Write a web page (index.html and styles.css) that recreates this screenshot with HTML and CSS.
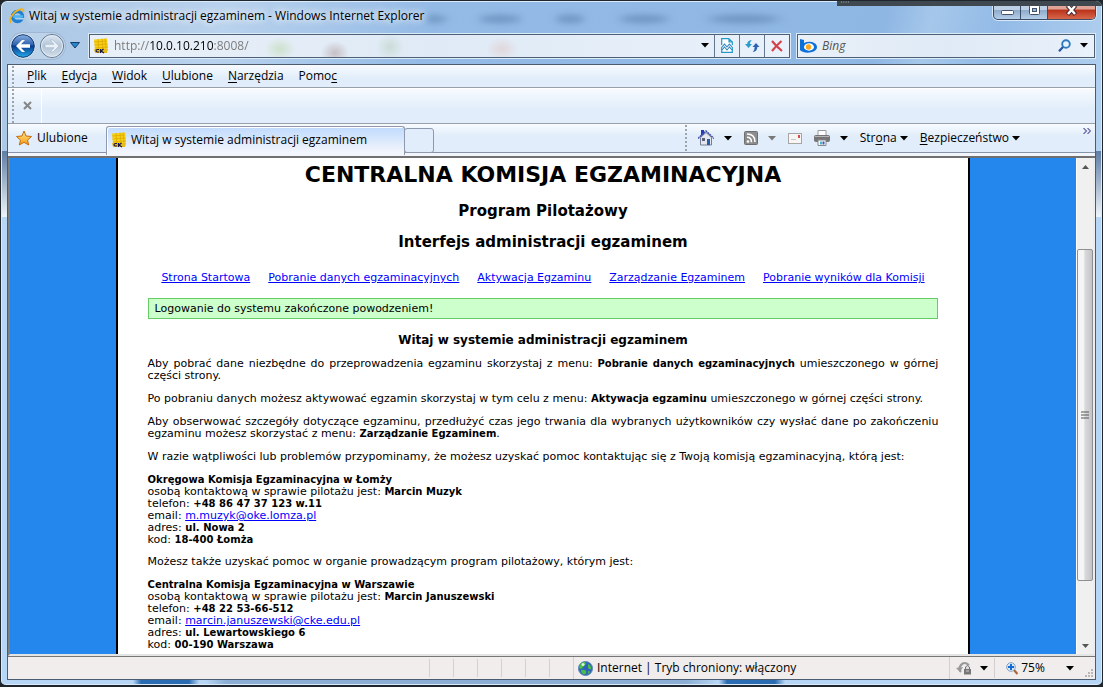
FILE: index.html
```html
<!DOCTYPE html>
<html lang="pl">
<head>
<meta charset="utf-8">
<title>Witaj w systemie administracji egzaminem</title>
<link rel="stylesheet" href="styles.css">
</head>
<body>
<svg width="0" height="0" class="defs" aria-hidden="true">
  <defs>
    <linearGradient id="blue" x2="0" y2="1"><stop offset="0" stop-color="#8fb4e4"/><stop offset=".45" stop-color="#2d62ad"/><stop offset=".5" stop-color="#06398c"/><stop offset="1" stop-color="#28b3f3"/></linearGradient>
    <linearGradient id="pale" x2="0" y2="1"><stop offset="0" stop-color="#dbe6f2"/><stop offset=".5" stop-color="#b3c5d8"/><stop offset="1" stop-color="#d3dfea"/></linearGradient>
    <linearGradient id="gold" x2="0" y2="1"><stop offset="0" stop-color="#ffe98a"/><stop offset="1" stop-color="#f79a10"/></linearGradient>
    <symbol id="cke" viewBox="0 0 16 16">
      <path d="M1 1.500l13-1 1 10-13 2z" fill="#f8cf12"/>
      <path d="M1 4l13-1M1.500 7l13-1M2 10l13-1M5 1l1 12M9 .5l1 12M12 .5l1 11" stroke="#d8a900" stroke-width=".7"/>
      <path d="M1 11h9l5 0-1 4H2z" fill="#e6bb1c"/>
      <path d="M6 11.500H4.500q-1.500 0-1.500 1.200t1.500 1.300H6M7.500 11V15M10.500 11L8 13l3 2" fill="none" stroke="#1b1748" stroke-width="1.200"/>
    </symbol>
    <symbol id="down" viewBox="0 0 8 5"><path d="M0 0h8L4 4.500z" fill="currentColor"/></symbol>
  </defs>
</svg>
<div class="window">
  <header class="titlebar">
    <svg class="ic16" viewBox="0 0 16 16"><circle cx="8.500" cy="8.500" r="5" fill="none" stroke="#1f7fd0" stroke-width="3.400"/><path d="M4 8.500h10" stroke="#49b5f2" stroke-width="2.400"/><path d="M10 10.800h5" stroke="#b5d0ee" stroke-width="1.600"/><path d="M2 15C-1 12 4 4 10 1.700c4-1.700 5 .3 4 2.600" fill="none" stroke="#f2b319" stroke-width="1.700"/></svg>
    <span class="caption">Witaj w systemie administracji egzaminem - Windows Internet Explorer</span>
    <div class="backdrop"></div>
    <div class="winbuttons">
      <button aria-label="Minimalizuj"><svg width="13" height="13" viewBox="0 0 13 13"><rect x=".5" y="6.500" width="12" height="4" rx="1" fill="#fff" stroke="#42506a"/></svg></button>
      <button aria-label="Maksymalizuj"><svg width="13" height="13" viewBox="0 0 13 13"><rect x="1.500" y="1.500" width="10" height="9" rx="1" fill="#fff" stroke="#42506a"/><rect x="4.500" y="4.500" width="4" height="3" fill="#9bb7dc" stroke="#42506a"/></svg></button>
      <button class="close" aria-label="Zamknij"><svg width="13" height="13" viewBox="0 0 13 13"><path d="M2.500 1.500l8 9M10.500 1.500l-8 9" stroke="#4b2a32" stroke-width="4.400"/><path d="M3 2l7 8M10 2l-7 8" stroke="#fff" stroke-width="2.400"/></svg></button>
    </div>
    <div class="overlap"><svg width="8" height="2" viewBox="0 0 8 2"><path d="M0 1h8" stroke="#aab1b6" stroke-dasharray="1 1.300"/></svg></div>
  </header>

  <div class="navbar">
    <div class="history">
      <button aria-label="Wstecz"><svg width="26" height="26" viewBox="0 0 26 26"><circle cx="13" cy="13" r="12" fill="url(#blue)" stroke="#e9f3fc" /><circle cx="13" cy="13" r="11.300" fill="none" stroke="#163c70"/><path d="M6 13l6-6h3l-4 4.300h9v3.400h-9l4 4.300h-3z" fill="#fff"/></svg></button>
      <button aria-label="Dalej"><svg width="26" height="26" viewBox="0 0 26 26"><circle cx="13" cy="13" r="11.500" fill="url(#pale)" stroke="#5d728b"/><circle cx="13" cy="13" r="10.500" fill="none" stroke="#e4edf6"/><path d="M20 13l-6-6h-3l4 4.300H6v3.400h9L11 19h3z" fill="#e9f0f7" stroke="#a3b5c8" stroke-width=".6"/></svg></button>
    </div>
    <button class="recent" aria-label="Ostatnie strony"><svg width="10" height="7" viewBox="0 0 10 7"><path d="M.5.5h9L5 6z" fill="#2488c9" stroke="#153e6c"/></svg></button>
    <div class="address">
      <svg class="ic16"><use href="#cke"/></svg>
      <input class="url" type="text" aria-label="Adres" value="http://10.0.10.210:8008/">
      <button class="drop" aria-label="Pokaż adresy"><svg class="arrow"><use href="#down"/></svg></button>
      <button class="cell" aria-label="Widok zgodności"><svg width="12" height="15" viewBox="0 0 12 15"><path d="M.7 7V.7h7L11.300 4v3M8 1v3h3M.7 9v5.300h10.600V9" fill="#fff" stroke="#2497c5" stroke-width="1.200"/><path d="M1 9l2.500-3L6 9l2.500-3L11 9M1 12l2.500-3L6 12l2.500-3L11 12" fill="none" stroke="#2d83c0" stroke-width="1.100"/></svg></button>
      <button class="cell" aria-label="Odśwież"><svg width="15" height="14" viewBox="0 0 15 14"><path d="M0 5l3.500 4L7 5H4.800q0-2 2-4Q2.200 1.500 2.200 5z" fill="#2a9ccb"/><path d="M14.500 8L11 4 7.500 8h2.200q0 3-2 5 4.600-.5 4.600-5z" fill="#2a62b4"/></svg></button>
      <button class="cell" aria-label="Zatrzymaj"><svg width="12" height="12" viewBox="0 0 12 12"><path d="M1 1q4 5 10 10M10.500 1Q5 6 1 11" fill="none" stroke="#d3424a" stroke-width="2.200"/></svg></button>
    </div>
    <div class="search">
      <svg width="17" height="14" viewBox="0 0 17 14"><path d="M0 0l4 1v3q4-2 8-1 5 1.500 5 5t-5 5q-6 2-11-1L0 11z" fill="#0d70d8"/><ellipse cx="9" cy="8" rx="5" ry="3.700" fill="#fff"/><circle cx="8.500" cy="8" r="2.700" fill="#f6a51c"/></svg>
      <input type="search" aria-label="Wyszukaj" placeholder="Bing">
      <button aria-label="Szukaj"><svg width="13" height="13" viewBox="0 0 13 13"><circle cx="8" cy="5" r="3.800" fill="#e7f3fd" stroke="#2c79bd" stroke-width="1.900"/><path d="M5 8l-4 4.200" stroke="#2458a0" stroke-width="2.300"/></svg></button>
      <button aria-label="Opcje wyszukiwania"><svg class="arrow"><use href="#down"/></svg></button>
    </div>
  </div>

  <div class="frame">
    <nav class="menubar" aria-label="Menu">
      <button><u>P</u>lik</button><button><u>E</u>dycja</button><button><u>W</u>idok</button><button><u>U</u>lubione</button><button><u>N</u>arzędzia</button><button>Pomo<u>c</u></button>
    </nav>
    <div class="toolbar"><button aria-label="Zamknij pasek"><svg width="9" height="9" viewBox="0 0 9 9"><path d="M1 1l7 7M8 1L1 8" stroke="#858585" stroke-width="2"/></svg></button></div>
    <div class="tabrow">
      <button class="favourites"><svg class="ic16" viewBox="0 0 16 16"><path d="M8 1l2 5 5.500.5-4 3.600L12.700 15 8 12.300 3.300 15l1.200-4.900-4-3.600L6 6z" fill="url(#gold)" stroke="#c36c0c"/></svg>Ulubione</button>
      <button class="tab"><svg class="ic16"><use href="#cke"/></svg>Witaj w systemie administracji egzaminem</button>
      <button class="newtab" aria-label="Nowa karta"></button>
      <div class="commands">
        <button aria-label="Strona główna"><svg width="16" height="16" viewBox="0 0 16 16"><path d="M2.500 7.500L8 2.500l5.500 5V15h-11z" fill="#e6e7ed" stroke="#777d94"/><path d="M3 0h3v4L3 6z" fill="#2538bd"/><path d="M0 8.500L8 1l8 7.500" fill="none" stroke="#3f4fae" stroke-width="1.500" stroke-dasharray="2 .6"/><path d="M4 8h3v3H4z" fill="#59617b"/><path d="M9 9h3v6H9z" fill="#2460ac"/></svg><svg class="arrow"><use href="#down"/></svg></button>
        <button aria-label="Źródła"><svg width="14" height="14" viewBox="0 0 14 14"><rect x=".5" y=".5" width="13" height="13" rx="1" fill="#8d8d8d" stroke="#6f6f6f"/><circle cx="4" cy="10.500" r="1.300" fill="#fff"/><path d="M3 6.200q4.500 0 4.500 5M3 3q8 0 8 8" fill="none" stroke="#fff" stroke-width="1.600"/></svg><svg class="arrow dim"><use href="#down"/></svg></button>
        <button aria-label="Poczta"><svg width="14" height="11" viewBox="0 0 14 11"><rect x=".5" y=".5" width="13" height="10" fill="#f7f6f5" stroke="#a7a5a5"/><path d="M10 2h2v3h-2z" fill="#d94b4b"/><path d="M3 6.500h5" stroke="#c4c4cc"/></svg></button>
        <button aria-label="Drukuj"><svg width="16" height="16" viewBox="0 0 16 16"><path d="M4 6V.5h8V6" fill="#fff" stroke="#9b9b9b"/><rect y="5" width="16" height="7" rx="2" fill="#747577"/><path d="M1 6.500h14" stroke="#b5b5b5"/><path d="M4 10h8v5.500H4z" fill="#fff" stroke="#888"/><path d="M6 11.500h2v3H6z" fill="#40b5d0"/><path d="M8.500 11.500h2v3h-2z" fill="#355db1"/></svg><svg class="arrow"><use href="#down"/></svg></button>
        <button class="text"><span>Str<u>o</u>na</span><svg class="arrow"><use href="#down"/></svg></button>
        <button class="text"><span><u>B</u>ezpieczeństwo</span><svg class="arrow"><use href="#down"/></svg></button>
      </div>
      <button class="more" aria-label="Więcej poleceń"><svg width="8" height="6" viewBox="0 0 8 6"><path d="M.5 0l3 3-3 3M4.500 0l3 3-3 3" fill="none" stroke="#6367a8" stroke-width="1.200"/></svg></button>
    </div>

    <div class="viewport">
      <div class="page">
        <main class="sheet">
          <h1>CENTRALNA KOMISJA EGZAMINACYJNA</h1>
          <h2>Program Pilotażowy</h2>
          <h2>Interfejs administracji egzaminem</h2>
          <nav class="links">
            <a href="#">Strona Startowa</a><a href="#">Pobranie danych egzaminacyjnych</a><a href="#">Aktywacja Egzaminu</a><a href="#">Zarządzanie Egzaminem</a><a href="#">Pobranie wyników dla Komisji</a>
          </nav>
          <div class="notice">Logowanie do systemu zakończone powodzeniem!</div>
          <h3>Witaj w systemie administracji egzaminem</h3>
          <p>Aby pobrać dane niezbędne do przeprowadzenia egzaminu skorzystaj z menu: <b>Pobranie danych egzaminacyjnych</b> umieszczonego w górnej części strony.</p>
          <p>Po pobraniu danych możesz aktywować egzamin skorzystaj w tym celu z menu: <b>Aktywacja egzaminu</b> umieszczonego w górnej części strony.</p>
          <p>Aby obserwować szczegóły dotyczące egzaminu, przedłużyć czas jego trwania dla wybranych użytkowników czy wysłać dane po zakończeniu egzaminu możesz skorzystać z menu: <b>Zarządzanie Egzaminem</b>.</p>
          <p>W razie wątpliwości lub problemów przypominamy, że możesz uzyskać pomoc kontaktując się z Twoją komisją egzaminacyjną, którą jest:</p>
          <address><b>Okręgowa Komisja Egzaminacyjna w Łomży</b><br>osobą kontaktową w sprawie pilotażu jest: <b>Marcin Muzyk</b><br>telefon: <b>+48 86 47 37 123 w.11</b><br>email: <a href="mailto:m.muzyk@oke.lomza.pl">m.muzyk@oke.lomza.pl</a><br>adres: <b>ul. Nowa 2</b><br>kod: <b>18-400 Łomża</b></address>
          <p>Możesz także uzyskać pomoc w organie prowadzącym program pilotażowy, którym jest:</p>
          <address><b>Centralna Komisja Egzaminacyjna w Warszawie</b><br>osobą kontaktową w sprawie pilotażu jest: <b>Marcin Januszewski</b><br>telefon: <b>+48 22 53-66-512</b><br>email: <a href="mailto:marcin.januszewski@cke.edu.pl">marcin.januszewski@cke.edu.pl</a><br>adres: <b>ul. Lewartowskiego 6</b><br>kod: <b>00-190 Warszawa</b></address>
        </main>
      </div>
      <div class="scrollbar">
        <button aria-label="Przewiń w górę"><svg width="7" height="4" viewBox="0 0 7 4"><path d="M0 4h7L3.500 0z" fill="#555"/></svg></button>
        <div class="before"></div>
        <div class="thumb"><svg width="8" height="8" viewBox="0 0 8 8"><path d="M0 1h8M0 4h8M0 7h8" stroke="#555"/></svg></div>
        <div class="after"></div>
        <button aria-label="Przewiń w dół"><svg width="7" height="4" viewBox="0 0 7 4"><path d="M0 0h7L3.500 4z" fill="#555"/></svg></button>
      </div>
    </div>

    <footer class="status">
      <div class="cells"><i></i><i></i><i></i><i></i><i></i><i></i></div>
      <div class="zone"><svg width="15" height="15" viewBox="0 0 15 15"><circle cx="7.500" cy="7.500" r="7" fill="#2e62bd" stroke="#5d84b5"/><path d="M3 2q4-2 5 0 0 2-2 3-1 2-3 3-2 0-2-2zM10 3q3 1 3.500 5-2 1-3.500-1zM3 9q4-1 5 1 1 3-2 3.500Q3 12 3 9zM10 10q2 0 2 1l-2 2z" fill="#48bd48"/><circle cx="5" cy="3.500" r="1.500" fill="#d9f3de"/></svg>Internet | Tryb chroniony: włączony</div>
      <button class="privacy" aria-label="Filtrowanie"><svg width="16" height="14" viewBox="0 0 16 14"><path d="M5 11Q2 8 5 4t8 0" fill="none" stroke="#999" stroke-width="2.200"/><path d="M0 7l4 4 3-5z" fill="#999"/><path d="M9.500 8V6q2-3 4 0v2" fill="#ddd" stroke="#777"/><path d="M8 8h7v5.500H8z" fill="#777"/><path d="M10 10h3" stroke="#ccc"/></svg><svg class="arrow"><use href="#down"/></svg></button>
      <button class="zoom"><svg width="12" height="13" viewBox="0 0 12 13"><path d="M8 8l3.500 4" stroke="#a9673a" stroke-width="2.200"/><circle cx="5" cy="5" r="4.300" fill="#dbecfb" stroke="#829ebd"/><path d="M5 2v6M2 5h6" stroke="#176bd0" stroke-width="2"/></svg><span>75%</span><svg class="arrow"><use href="#down"/></svg></button>
      <svg class="grip" width="9" height="9" viewBox="0 0 9 9"><path d="M6 0h2v2H6zM3 3h2v2H3zM6 3h2v2H6zM0 6h2v2H0zM3 6h2v2H3zM6 6h2v2H6z" fill="#bab6b5"/></svg>
    </footer>
  </div>
</div>
</body>
</html>
```
FILE: styles.css
```css
* { box-sizing: border-box; }
body { margin: 0; font: 12px/16px "Open Sans", "Noto Sans", sans-serif; color: #000; background: #20262d; }
button { margin: 0; padding: 0; border: 0; background: none; color: inherit; font: inherit; display: flex; align-items: center; justify-content: center; }
input { min-width: 0; padding: 0; border: 0; outline: 0; background: none; font: inherit; appearance: none; }
svg { flex: none; display: block; }
u { text-underline-offset: 2px; }
.defs { position: absolute; }
.ic16 { width: 16px; height: 16px; }
.arrow { width: 8px; height: 5px; }
.dim { color: #777; }

.window {
  height: 100vh; overflow: hidden; position: relative;
  display: flex; flex-direction: column;
  padding: 0 6px 5px;
  border: 1px solid #20262d; border-bottom-width: 2px; border-radius: 7px 7px 6px 6px;
  background:
    linear-gradient(90deg, transparent, #2a6cb2 8px, #2a6cb2 56px, transparent) 132px 100% / 66px 5px no-repeat,
    linear-gradient(90deg, transparent, #2a6cb2 8px, #2a6cb2 56px, transparent) 718px 100% / 66px 5px no-repeat,
    linear-gradient(90deg, transparent, #8aaed4 20px, #8aaed4 480px, transparent) 205px 100% / 510px 5px no-repeat,
    linear-gradient(#5f7da6, #eef5fb) 0 150px / 7px 66px no-repeat,
    linear-gradient(#5f7da6, #eef5fb) 100% 150px / 7px 66px no-repeat,
    linear-gradient(105deg, #a9c6e4 0, #b9d2ed 20%, #94bbe6 38%, #8fb7e4 78%, #a5c7ea 82%, #93bbe7 88%, #b6d3f0) 0 0 / 100% 150px no-repeat,
    #b7d5f4;
  box-shadow: inset 0 0 0 1px #dcebfa;
}
.titlebar { height: 29px; display: flex; align-items: center; gap: 4px; padding-left: 2px; }
.caption { white-space: nowrap; text-shadow: 0 0 8px #fff, 0 0 8px #fff; }
.backdrop {
  flex: 1; align-self: stretch; filter: blur(3px);
  background:
    radial-gradient(ellipse 24px 5px at 0px 18px, #5e83b0aa 60%, transparent),
    radial-gradient(ellipse 26px 5px at 72px 18px, #5e83b0aa 60%, transparent),
    radial-gradient(ellipse 18px 5px at 142px 18px, #5e83b0aa 60%, transparent),
    radial-gradient(ellipse 30px 5px at 216px 18px, #5e83b0aa 60%, transparent),
    radial-gradient(ellipse 44px 5px at 316px 18px, #5e83b0aa 60%, transparent);
}
.winbuttons { align-self: flex-start; display: flex; height: 19px; border: 1px solid #3a4c66; border-top: 0; border-radius: 0 0 5px 5px; overflow: hidden; box-shadow: 0 0 0 1px #d8e8f7; background: linear-gradient(#bdd0e6 50%, #8eaacb 51%, #b6cfe9); }
.winbuttons button { width: 27px; border-right: 1px solid #3a4c66; }
.winbuttons .close { width: 47px; border-right: 0; background: linear-gradient(#e0a496 45%, #b93119 50%, #d8684a); }
.overlap { position: absolute; top: 0; right: 0; width: 265px; height: 5px; padding-left: 4px; background: #40484f; }

.navbar { height: 34px; display: flex; align-items: center; padding: 0 1px 3px 3px; }
.history { display: flex; gap: 3px; border-radius: 14px; background: #c5d8ecaa; box-shadow: 0 0 0 1px #9fb7d2; }
.recent { width: 19px; }
.address, .search { height: 24px; display: flex; align-items: center; border: 1px solid #4e6075; box-shadow: 0 0 0 1px #dcebf8; background: linear-gradient(90deg, #e9f0f8, #dfeaf6 50%, #e9f1fa); }
.address {
  flex: 1; margin-left: 5px; padding-left: 3px;
  background:
    radial-gradient(ellipse 14px 14px at 300px 12px, #b9d0bd88, transparent),
    radial-gradient(ellipse 14px 12px at 245px 18px, #a07b7b66, transparent),
    radial-gradient(ellipse 16px 12px at 412px 14px, #e2b9b066, transparent),
    radial-gradient(ellipse 16px 12px at 190px 14px, #bcd6a988, transparent),
    linear-gradient(90deg, #e9f0f8, #dfeaf6 50%, #e9f1fa);
}
.url { flex: 1; height: 20px; margin-left: 5px; color: transparent; background: linear-gradient(90deg, #777 35px, #000 35px 99px, #777 99px); -webkit-background-clip: text; background-clip: text; }
.drop { width: 19px; height: 22px; }
.cell { width: 25px; height: 22px; border-left: 1px solid #65778d; }
.search { width: 298px; margin-left: 7px; padding: 0 0 0 2px; }
.search input { flex: 1; margin-left: 5px; font-style: italic; }
.search input::placeholder { color: #555; opacity: 1; }
.search button { width: 20px; height: 20px; }

.frame { flex: 1; min-height: 0; display: flex; flex-direction: column; border: 1px solid #4c5c70; background: #e1edfa; }
.menubar { height: 23px; display: flex; align-items: center; gap: 15px; padding-left: 19px; border-bottom: 1px solid #98a0a9; }
.menubar, .toolbar { background: radial-gradient(circle at 1px 2px, #9ba3ac 1px, transparent 1px) 4px 0 / 4px 4px repeat-y, linear-gradient(#f8fbff, #e1edfa 60%); }
.toolbar { height: 36px; display: flex; border-bottom: 1px solid #98a0a9; box-shadow: inset 0 1px #fff; }
.toolbar button { width: 34px; padding-left: 5px; border-right: 1px solid #fff; }
.tabrow { height: 34px; display: flex; align-items: flex-start; border-bottom: 2px solid #707070; background: linear-gradient(#f8fbff, #e1edfa 12px, #e1edfa 28px, #8793a8 28px, #8793a8 29px, #f2f5fc 29px); }
.favourites { height: 28px; width: 98px; justify-content: flex-start; gap: 5px; padding-left: 8px; }
.tab { height: 29px; width: 299px; margin-top: 2px; justify-content: flex-start; gap: 4px; padding: 0 4px 3px 4px; border: 1px solid #8e99ad; border-bottom: 0; border-radius: 3px 3px 0 0; background: linear-gradient(#bfdafd, #f2f5fc 90%); box-shadow: inset 1px 1px #fff; white-space: nowrap; }
.newtab { width: 30px; height: 25px; margin-top: 4px; margin-left: -1px; border: 1px solid #8e99ad; border-radius: 3px; background: #e1edfa; }
.commands { margin-left: auto; height: 28px; display: flex; align-items: center; gap: 12px; padding-left: 13px; white-space: nowrap; background: radial-gradient(circle at 1px 2px, #9ba3ac 1px, transparent 1px) 0 0 / 4px 4px repeat-y; }
.commands button { gap: 10px; }
.commands .text { gap: 3px; }
.more { width: 13px; margin: 4px 2px 0 60px; }

.viewport { flex: 1; min-height: 0; display: flex; border-left: 2px solid #808080; border-right: 2px solid #ededed; border-bottom: 2px solid #e4e4e4; }
.page { flex: 1; overflow: hidden; display: flex; justify-content: center; background: #2487ed; }
.sheet { width: calc(80% + 2px); height: max-content; min-height: 100%; padding: 3px 30px 10px; border: solid #000; border-width: 0 2px; background: #fff; font: 11px/12px Verdana, "DejaVu Sans", sans-serif; }
.sheet a { color: #00f; text-underline-offset: 1px; }
.sheet b { font-size: 10px; line-height: 10px; }
h1, h2, h3 { margin: 0; text-align: center; }
h1 { font-size: 22px; line-height: 28px; margin-bottom: 13px; }
h2 { font-size: 15px; line-height: 18px; margin-bottom: 13px; }
h3 { font-size: 12px; line-height: 16px; margin: 13px 0 10px; }
.links { display: flex; justify-content: center; gap: 18px; margin: 21px 0 14px; white-space: nowrap; }
.notice { padding: 4px 6px; border: 1px solid #66cc66; background: #ccffcc; line-height: 11px; }
p, address { margin: 0 0 11px; font-style: normal; }
address { margin-bottom: 10px; }
p { text-align: justify; }
.scrollbar { width: 17px; display: flex; flex-direction: column; border-left: 1px solid #fff; background: #f0f0f0; }
.scrollbar button { height: 17px; }
.before { flex: 74; }
.after { flex: 56; }
.thumb { flex: 333; display: flex; align-items: center; justify-content: center; border: 1px solid #8f8f8f; border-radius: 2px; background: linear-gradient(90deg, #f5f5f5 40%, #d9dadc 50%, #c3c4c7); }

.status { height: 23px; display: flex; align-items: center; border-top: 1px solid #777; background: #f0edec; white-space: nowrap; }
.cells { flex: 1; align-self: stretch; display: flex; justify-content: flex-end; padding: 2px 0; }
.cells i { width: 24px; border-left: 1px solid #d2cfce; }
.zone { width: 377px; align-self: stretch; display: flex; align-items: center; gap: 4px; padding-left: 4px; border: solid #d2cfce; border-width: 0 1px; }
.privacy { width: 45px; height: 20px; gap: 8px; border-right: 1px solid #d2cfce; }
.zoom { width: 90px; gap: 3px; }
.zoom span { flex: none; margin-right: 18px; }
.grip { align-self: flex-end; margin: 0 1px 1px 0; }
```
